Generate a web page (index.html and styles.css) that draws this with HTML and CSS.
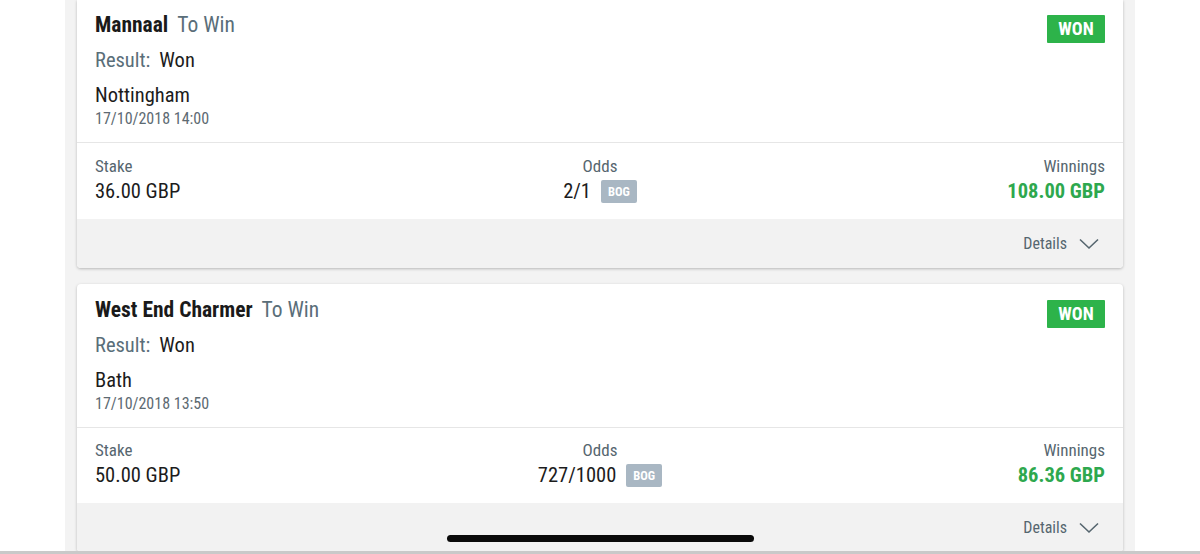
FILE: index.html
```html
<!DOCTYPE html>
<html lang="en">
<head>
<meta charset="utf-8">
<title>Bets</title>
<link rel="stylesheet" href="styles.css">
</head>
<body>
<div class="screen">
  <div class="column">
    <div class="card card-first">
      <div class="card-top">
        <div class="info">
          <div class="title"><span class="name">Mannaal</span><span class="market">To Win</span></div>
          <div class="result"><span class="label">Result:</span><span class="value">Won</span></div>
          <div class="venue">Nottingham</div>
          <div class="date">17/10/2018 14:00</div>
        </div>
        <span class="badge-won">WON</span>
      </div>
      <div class="card-mid">
        <div class="cell cell-left">
          <div class="cell-label">Stake</div>
          <div class="cell-value">36.00 GBP</div>
        </div>
        <div class="cell cell-center">
          <div class="cell-label">Odds</div>
          <div class="cell-value"><span>2/1</span><span class="bog">BOG</span></div>
        </div>
        <div class="cell cell-right">
          <div class="cell-label">Winnings</div>
          <div class="cell-value win">108.00 GBP</div>
        </div>
      </div>
      <div class="card-foot">
        <span class="details">Details</span>
        <svg class="chev" width="20" height="12" viewBox="0 0 20 12"><polyline points="1,1.5 10,10 19,1.5" fill="none" stroke="#56666f" stroke-width="1.6"/></svg>
      </div>
    </div>

    <div class="card">
      <div class="card-top">
        <div class="info">
          <div class="title"><span class="name">West End Charmer</span><span class="market">To Win</span></div>
          <div class="result"><span class="label">Result:</span><span class="value">Won</span></div>
          <div class="venue">Bath</div>
          <div class="date">17/10/2018 13:50</div>
        </div>
        <span class="badge-won">WON</span>
      </div>
      <div class="card-mid">
        <div class="cell cell-left">
          <div class="cell-label">Stake</div>
          <div class="cell-value">50.00 GBP</div>
        </div>
        <div class="cell cell-center">
          <div class="cell-label">Odds</div>
          <div class="cell-value"><span>727/1000</span><span class="bog">BOG</span></div>
        </div>
        <div class="cell cell-right">
          <div class="cell-label">Winnings</div>
          <div class="cell-value win">86.36 GBP</div>
        </div>
      </div>
      <div class="card-foot">
        <span class="details">Details</span>
        <svg class="chev" width="20" height="12" viewBox="0 0 20 12"><polyline points="1,1.5 10,10 19,1.5" fill="none" stroke="#56666f" stroke-width="1.6"/></svg>
      </div>
    </div>
  </div>
  <div class="home-bar"></div>
  <div class="bottom-line"></div>
</div>
</body>
</html>
```
FILE: styles.css
```css
* { box-sizing: border-box; }
html, body {
  margin: 0;
  padding: 0;
  background: #ffffff;
}
body {
  font-family: "Roboto Condensed", "Liberation Sans Narrow", Roboto, sans-serif;
  color: #1c1c1c;
  overflow: hidden;
}
.screen {
  position: relative;
  width: 1200px;
  height: 554px;
  overflow: hidden;
  display: flex;
  flex-direction: column;
}
.column {
  margin: 0 65px;
  width: 1070px;
  flex: 1;
  background: #f3f3f3;
  padding: 0 12px;
  display: flex;
  flex-direction: column;
  gap: 16px;
  overflow: hidden;
}
.card {
  background: #ffffff;
  border-radius: 4px;
  box-shadow: 0 1px 3px rgba(0,0,0,0.25);
  flex-shrink: 0;
  overflow: hidden;
}
.card-first {
  border-top-left-radius: 0;
  border-top-right-radius: 0;
}
.card-first .card-top { padding-top: 13px; }
.card-top {
  display: flex;
  justify-content: space-between;
  align-items: flex-start;
  padding: 14px 18px 14px 18px;
  border-bottom: 1px solid #e6e6e6;
}
.title {
  font-size: 21.5px;
  line-height: 24px;
  display: flex;
  gap: 9px;
}
.name { font-weight: 700; color: #1a1a1a; }
.market { color: #5a6e79; }
.result {
  margin-top: 11px;
  font-size: 20.5px;
  line-height: 24px;
  display: flex;
  gap: 9px;
}
.result .label { color: #5a6e79; }
.result .value { color: #1c1c1c; }
.venue {
  margin-top: 11px;
  font-size: 20.5px;
  line-height: 24px;
}
.date {
  margin-top: 3px;
  font-size: 16px;
  line-height: 18px;
  color: #5d6a72;
}
.badge-won {
  margin-top: 2px;
  background: #2db34a;
  color: #ffffff;
  font-weight: 700;
  font-size: 18px;
  line-height: 28px;
  height: 28px;
  width: 58px;
  text-align: center;
  border-radius: 1px;
}
.card-first .badge-won { margin-top: 2px; }
.card-mid {
  display: grid;
  grid-template-columns: 1fr 1fr 1fr;
  padding: 12px 18px 16px 18px;
}
.card-first .card-mid { padding-top: 13px; }
.cell-label {
  font-size: 17px;
  line-height: 20px;
  color: #56666f;
}
.cell-value {
  margin-top: 3px;
  font-size: 20.5px;
  line-height: 24px;
  color: #1c1c1c;
  display: flex;
  align-items: center;
  gap: 10px;
}
.cell-center { text-align: center; }
.cell-center .cell-value { justify-content: center; }
.cell-right { text-align: right; }
.cell-right .cell-value { justify-content: flex-end; }
.win { color: #2ea84e; font-weight: 700; }
.bog {
  background: #a9b7c3;
  color: #ffffff;
  font-size: 12.5px;
  font-weight: 700;
  line-height: 23px;
  height: 23px;
  padding: 0 7px;
  border-radius: 2px;
}
.card-foot {
  background: #f2f2f2;
  height: 49px;
  display: flex;
  justify-content: flex-end;
  align-items: center;
  padding: 0 24px 0 18px;
  gap: 12px;
}
.details {
  font-size: 16px;
  color: #56666f;
}
.chev { display: block; margin-top: 1px; }
.home-bar {
  position: absolute;
  left: 447px;
  top: 535px;
  width: 307px;
  height: 7px;
  border-radius: 4px;
  background: #0a0a0a;
}
.bottom-line {
  height: 3px;
  background: #c9c9c9;
  flex-shrink: 0;
}
```
